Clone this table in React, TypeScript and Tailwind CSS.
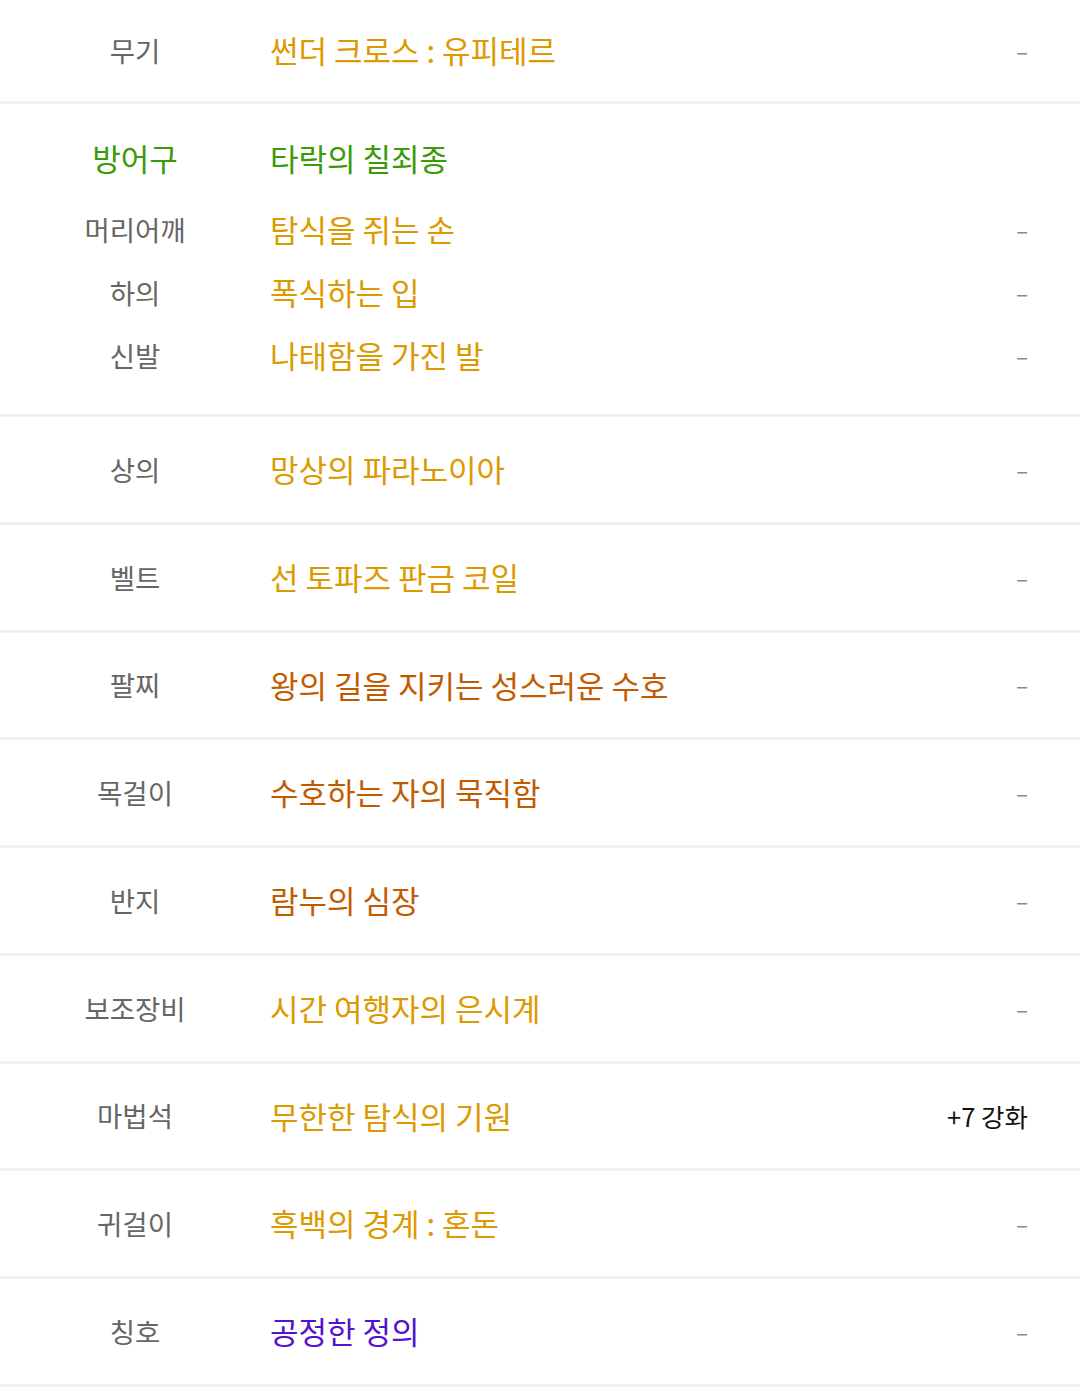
type Item = {
  slot: string;
  name: string;
  color: string;
  extra?: string;
};

const gold = 'text-[#dc9a00]';
const orange = 'text-[#c25b00]';
const purple = 'text-[#5411cf]';

const armor: Item[] = [
  { slot: '머리어깨', name: '탐식을 쥐는 손', color: gold },
  { slot: '하의', name: '폭식하는 입', color: gold },
  { slot: '신발', name: '나태함을 가진 발', color: gold },
];

const after: Item[] = [
  { slot: '상의', name: '망상의 파라노이아', color: gold },
  { slot: '벨트', name: '선 토파즈 판금 코일', color: gold },
  { slot: '팔찌', name: '왕의 길을 지키는 성스러운 수호', color: orange },
  { slot: '목걸이', name: '수호하는 자의 묵직함', color: orange },
  { slot: '반지', name: '람누의 심장', color: orange },
  { slot: '보조장비', name: '시간 여행자의 은시계', color: gold },
  { slot: '마법석', name: '무한한 탐식의 기원', color: gold, extra: '+7 강화' },
  { slot: '귀걸이', name: '흑백의 경계 : 혼돈', color: gold },
  { slot: '칭호', name: '공정한 정의', color: purple },
];

function Extra({ text }: { text?: string }) {
  if (text) {
    return <span className="text-[25.5px] text-[#111]">{text}</span>;
  }
  return <span className="text-[22px] text-[#8a8a8a]">–</span>;
}

function Line({ item, height }: { item: Item; height: string }) {
  return (
    <div className={`flex items-center ${height}`}>
      <div className="w-[270px] text-center text-[27.5px] text-[#666]">{item.slot}</div>
      <div className={`flex-1 text-[31px] ${item.color}`}>{item.name}</div>
      <div className="pr-[52px]">
        <Extra text={item.extra} />
      </div>
    </div>
  );
}

export default function App() {
  return (
    <main
      className="min-h-[1390px] bg-white"
      style={{ fontFamily: '"Noto Sans CJK KR", "Noto Sans", sans-serif' }}
    >
      <div className="border-b-[3px] border-[#f1f1f1]">
        <Line item={{ slot: '무기', name: '썬더 크로스 : 유피테르', color: gold }} height="h-[101px]" />
      </div>

      {/* armor set block */}
      <div className="border-b-[3px] border-[#f1f1f1] pt-[23px] pb-[27px]">
        <div className="flex h-[63px] items-center">
          <div className="w-[270px] text-center text-[31px] text-[#3a9a08]">방어구</div>
          <div className="flex-1 text-[31px] text-[#3a9a08]">타락의 칠죄종</div>
        </div>
        <div className="mt-[8px]">
          {armor.map((item) => (
            <Line key={item.slot} item={item} height="h-[63px]" />
          ))}
        </div>
      </div>

      {after.map((item) => (
        <div key={item.slot} className="border-b-[3px] border-[#f1f1f1]">
          <Line item={item} height="h-[104.75px]" />
        </div>
      ))}
    </main>
  );
}
